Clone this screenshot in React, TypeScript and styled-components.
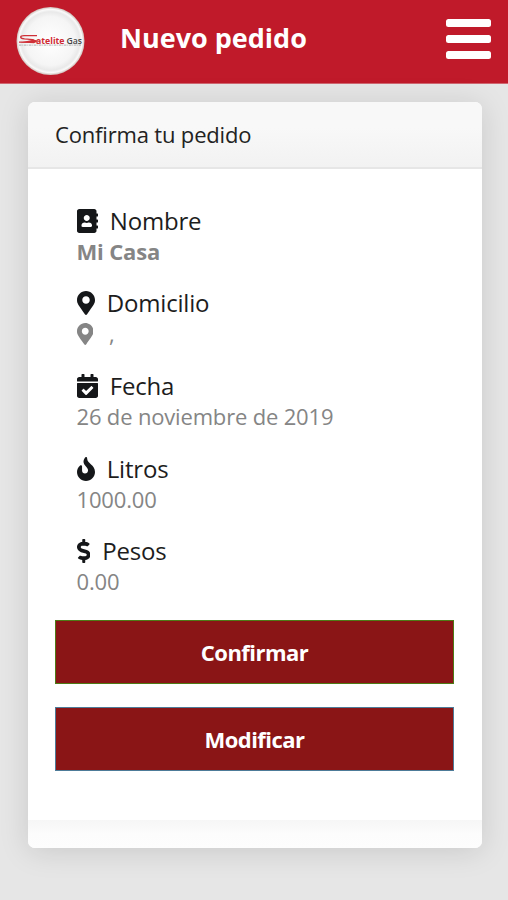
import React from "react";
import styled, { createGlobalStyle } from "styled-components";
import {
  FaAddressBook,
  FaMapMarkerAlt,
  FaCalendarCheck,
  FaDollarSign,
} from "react-icons/fa";

const GlobalStyle = createGlobalStyle`
  * { box-sizing: border-box; }
  body {
    margin: 0;
    background: #e6e6e6;
    font-family: "Open Sans", "Noto Sans", sans-serif;
    overflow: hidden;
  }
`;

const Page = styled.div`
  height: 900px;
  display: flex;
  flex-direction: column;
`;

const Header = styled.header`
  height: 84px;
  flex: none;
  display: flex;
  align-items: flex-start;
  padding: 6px 17px 0 15px;
  background: #c01a2a;
  border-bottom: 1px solid #cf6670;
`;

const Logo = styled.svg`
  width: 70px;
  height: 70px;
  flex: none;
`;

const Title = styled.h1`
  flex: 1;
  margin: 0 0 0 35px;
  font-size: 27px;
  line-height: 37px;
  padding-top: 13px;
  font-weight: 700;
  color: #fff;
`;

const MenuButton = styled.button`
  display: flex;
  flex-direction: column;
  gap: 8px;
  margin: 13px 0 0;
  padding: 0;
  border: 0;
  background: none;
`;

const MenuBar = styled.span`
  width: 45px;
  height: 8px;
  border-radius: 2.5px;
  background: #fff;
`;

const Card = styled.main`
  width: 454px;
  height: 746px;
  margin: 18px 0 0 28px;
  display: flex;
  flex-direction: column;
  border-radius: 7px;
  overflow: hidden;
  background: #fff;
  box-shadow: 0 3px 30px rgba(0, 0, 0, 0.13);
`;

const CardHeader = styled.div`
  height: 67px;
  flex: none;
  padding: 0 27px;
  font-size: 22px;
  line-height: 65px;
  letter-spacing: -0.17px;
  color: #222;
  background: linear-gradient(#f8f8f8 40%, #f2f2f2);
  border-bottom: 2px solid #e6e6e6;
`;

const CardBody = styled.div`
  flex: 1;
  padding: 35px 28px 0 27px;
`;

const CardFooter = styled.div`
  height: 28px;
  background: linear-gradient(#f6f6f6, #fcfcfc 50%, #fdfdfd);
`;

const Details = styled.dl`
  margin: 0 0 3px;
  padding-left: 21.5px;
`;

const Item = styled.div`
  height: 82.7px;
`;

const Glyph = styled.span<{ $width: number; $height: number }>`
  display: flex;
  flex: none;
  margin-top: 1px;

  svg {
    width: ${(p) => p.$width}px;
    height: ${(p) => p.$height}px;
  }
`;

const Label = styled.dt`
  display: flex;
  align-items: center;
  height: 32px;
  gap: 12.3px;
  font-size: 24px;
  letter-spacing: -0.2px;
  color: #1d1d1d;

  svg {
    color: #151719;
  }
`;

const Value = styled.dd<{ $bold?: boolean }>`
  display: flex;
  align-items: center;
  gap: 16px;
  height: 29px;
  margin: 0;
  font-size: 22px;
  font-weight: ${(p) => (p.$bold ? 700 : 400)};
  letter-spacing: -0.17px;
  color: #858585;
`;

const Actions = styled.div`
  display: flex;
  flex-direction: column;
  gap: 23px;
`;

const Action = styled.button<{ $edge: string }>`
  height: 64px;
  padding: 0;
  border: 1px solid ${(p) => p.$edge};
  background: #8a1516;
  color: #fff;
  font: 700 22px "Open Sans", "Noto Sans", sans-serif;
  letter-spacing: -0.55px;
`;

function FlameIcon() {
  return (
    <svg viewBox="0 0 384 512" fill="currentColor" aria-hidden="true">
      <path d="M216 24C216 0 185 -9 172 11C70 160 236 196 236 284C236 326 206 354 170 354C132 354 108 326 108 290V204C108 180 80 168 62 188C24 224 0 268 0 320C0 426 86 512 192 512S384 426 384 320C384 150 216 148 216 24Z" />
    </svg>
  );
}

function BrandLogo() {
  return (
    <Logo viewBox="0 0 70 70" role="img" aria-label="SateliteGas">
      <defs>
        <radialGradient id="disc" cx="50%" cy="50%" r="50%">
          <stop offset="0" stopColor="#ffffff" />
          <stop offset="0.72" stopColor="#f5f5f5" />
          <stop offset="0.86" stopColor="#e9e9e9" />
          <stop offset="0.93" stopColor="#fafafa" />
          <stop offset="1" stopColor="#cdbfb9" />
        </radialGradient>
      </defs>
      <circle cx="35.5" cy="35" r="34" fill="url(#disc)" />
      <path
        d="M22 29.600H9c-4 0-5 2.500.5 3.300l8 .8c3 .5 2.500 2.300-1 2.500H4"
        fill="none"
        stroke="#cf3038"
        strokeWidth="1.300"
      />
      <path d="M5 36.500 18 33.800 24 34.500 19 37.300Z" fill="#cf3038" />
      <text x="21" y="37.600" fontFamily="Open Sans" fontSize="9" fontWeight="700" fill="#d02a33" textLength="28.500" lengthAdjust="spacingAndGlyphs">
        atelite
      </text>
      <text x="51.500" y="37.600" fontFamily="Open Sans" fontSize="9" fontWeight="600" fill="#454545" textLength="15.500" lengthAdjust="spacingAndGlyphs">
        Gas
      </text>
      <path d="M4 39.200H66" stroke="#999" strokeWidth="1.200" strokeDasharray="2.500 .8 1 .7" opacity=".6" />
    </Logo>
  );
}

export default function App() {
  return (
    <Page>
      <GlobalStyle />
      <Header>
        <BrandLogo />
        <Title>Nuevo pedido</Title>
        <MenuButton aria-label="Menú">
          <MenuBar />
          <MenuBar />
          <MenuBar />
        </MenuButton>
      </Header>
      <Card>
        <CardHeader>Confirma tu pedido</CardHeader>
        <CardBody>
          <Details>
            <Item>
              <Label><Glyph $width={21} $height={24}><FaAddressBook /></Glyph>Nombre</Label>
              <Value $bold>Mi Casa</Value>
            </Item>
            <Item>
              <Label><Glyph $width={18} $height={24}><FaMapMarkerAlt /></Glyph>Domicilio</Label>
              <Value><Glyph $width={16.5} $height={22}><FaMapMarkerAlt /></Glyph>,</Value>
            </Item>
            <Item>
              <Label><Glyph $width={21} $height={24}><FaCalendarCheck /></Glyph>Fecha</Label>
              <Value>26 de noviembre de 2019</Value>
            </Item>
            <Item>
              <Label><Glyph $width={18} $height={24}><FlameIcon /></Glyph>Litros</Label>
              <Value>1000.00</Value>
            </Item>
            <Item>
              <Label><Glyph $width={13.5} $height={24}><FaDollarSign /></Glyph>Pesos</Label>
              <Value>0.00</Value>
            </Item>
          </Details>
          <Actions>
            <Action $edge="#4e7a16">Confirmar</Action>
            <Action $edge="#4d7b98">Modificar</Action>
          </Actions>
        </CardBody>
        <CardFooter />
      </Card>
    </Page>
  );
}
